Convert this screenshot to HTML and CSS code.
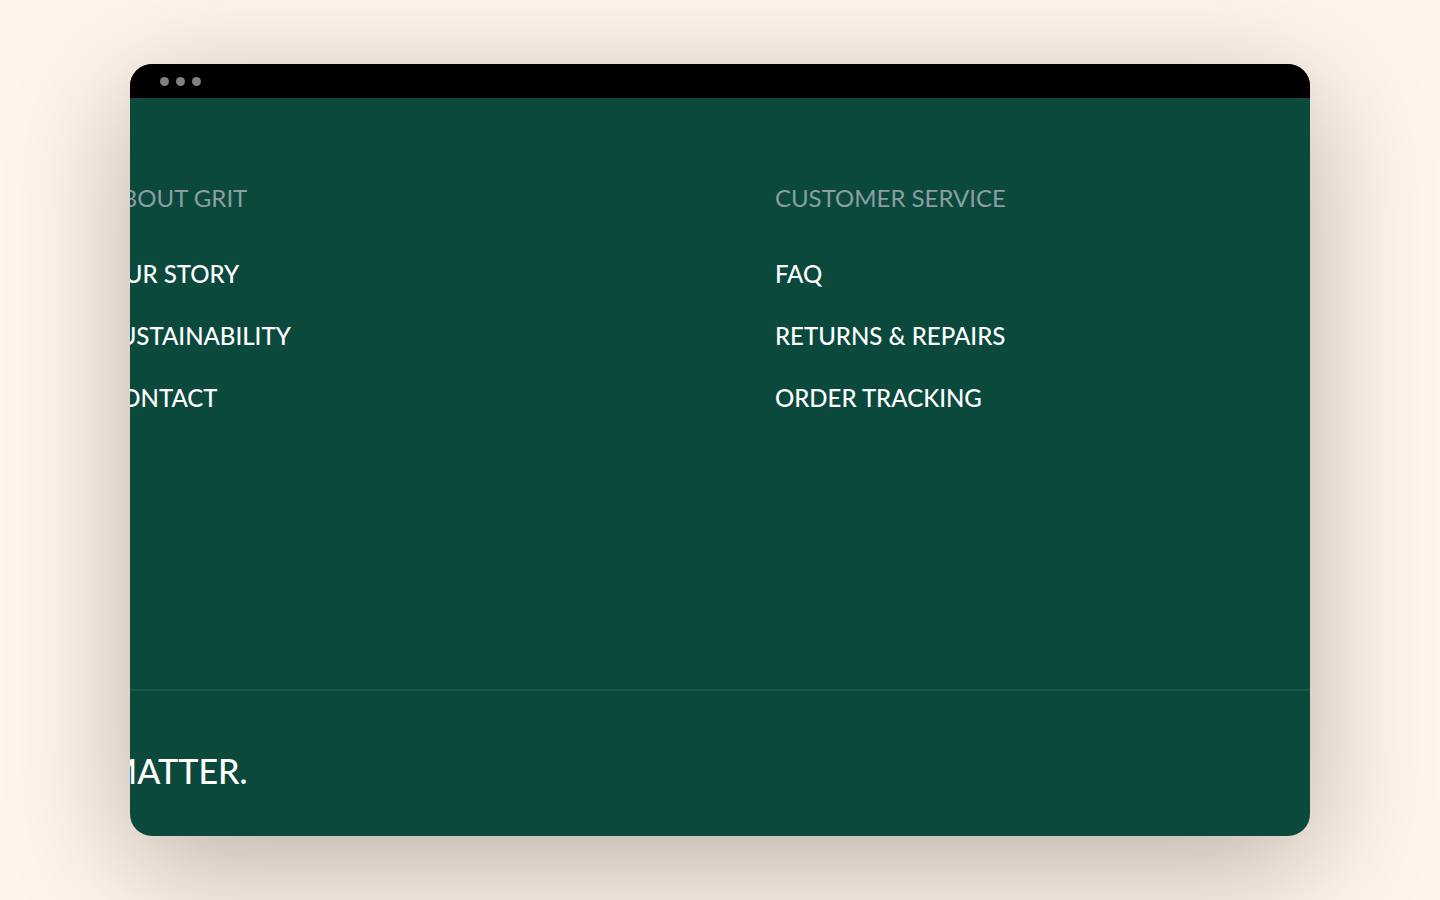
FILE: index.html
```html
<!DOCTYPE html>
<html lang="en">
<head>
    <meta charset="UTF-8">
    <meta name="viewport" content="width=device-width, initial-scale=1.0">
    <title>Grit</title>
    <link rel="stylesheet" href="styles.css">
</head>
<body>
    <div class="browser">
        <div class="browser-bar">
            <span class="dot"></span>
            <span class="dot"></span>
            <span class="dot"></span>
        </div>
        <footer class="footer">
            <div class="footer-links">
                <nav class="footer-col" aria-labelledby="about">
                    <h2 id="about">ABOUT GRIT</h2>
                    <ul>
                        <li><a href="#">OUR STORY</a></li>
                        <li><a href="#">SUSTAINABILITY</a></li>
                        <li><a href="#">CONTACT</a></li>
                    </ul>
                </nav>
                <nav class="footer-col" aria-labelledby="service">
                    <h2 id="service">CUSTOMER SERVICE</h2>
                    <ul>
                        <li><a href="#">FAQ</a></li>
                        <li><a href="#">RETURNS &amp; REPAIRS</a></li>
                        <li><a href="#">ORDER TRACKING</a></li>
                    </ul>
                </nav>
            </div>
            <div class="footer-bottom">
                <p class="slogan">MATTER.</p>
            </div>
        </footer>
    </div>
</body>
</html>
```
FILE: styles.css
```css
* {
    box-sizing: border-box;
    margin: 0;
    padding: 0;
}
body {
    font-family: Lato, "Open Sans", sans-serif;
    background-color: #fff4e8;
    min-height: 100vh;
    padding: 64px 9vw;
    display: flex;
}
.browser {
    flex: 1;
    display: flex;
    flex-direction: column;
    background-color: #0a493c;
    border-radius: 22px;
    overflow: hidden;
    box-shadow: 0 30px 120px rgba(0, 0, 0, 0.28);
}
.browser-bar {
    display: flex;
    align-items: center;
    gap: 7px;
    height: 34px;
    padding: 0 30px;
    background-color: #000;
}
.dot {
    width: 9px;
    height: 9px;
    border-radius: 50%;
    background-color: #808080;
}
.footer {
    flex: 1;
    display: flex;
    flex-direction: column;
    /* the page is wider than the window and runs out on the left */
    margin-left: -24px;
    color: #fff;
}
.footer-links {
    flex: 1;
    display: grid;
    grid-template-columns: 5fr 4fr;
    padding-top: 84px;
}
.footer-col h2 {
    font-size: 24px;
    font-weight: 400;
    line-height: 32px;
    margin-bottom: 44px;
    color: #8a9ea3;
}
.footer-col ul {
    list-style-type: none;
    display: flex;
    flex-direction: column;
    gap: 30px;
}
.footer-col li {
    font-size: 24px;
    font-weight: 500;
    line-height: 32px;
}
.footer-col a {
    color: #fff;
    text-decoration: none;
}
.footer-bottom {
    border-top: 2px solid #1b5749;
    padding: 58px 0 43px;
}
.slogan {
    font-size: 34px;
    font-weight: 500;
    line-height: 44px;
}
```
